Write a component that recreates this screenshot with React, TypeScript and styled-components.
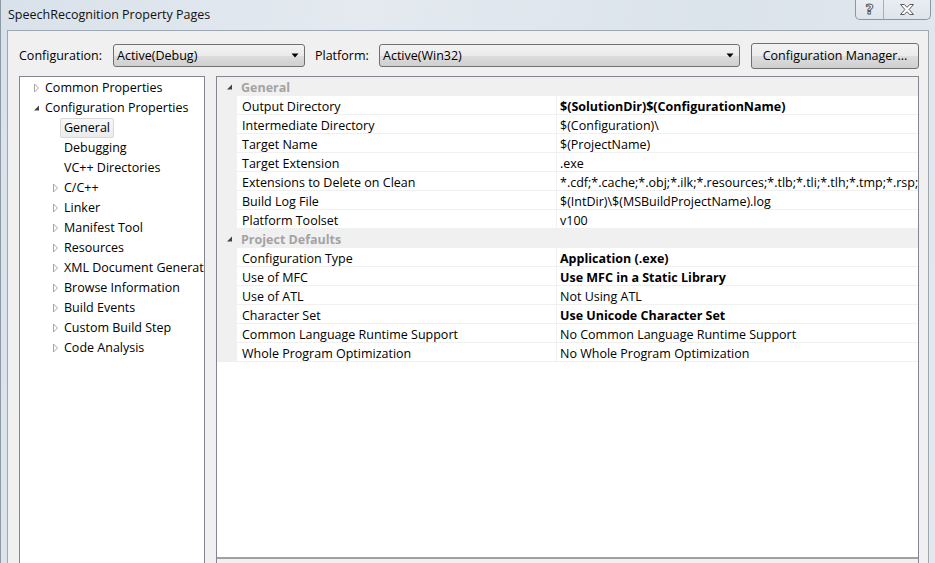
import React from 'react';
import styled, { createGlobalStyle } from 'styled-components';

const Global = createGlobalStyle`
  html, body { margin: 0; padding: 0; }
  body {
    width: 935px; height: 563px; overflow: hidden;
    font-family: "Open Sans", "Noto Sans", "DejaVu Sans", sans-serif;
    font-size: 12.5px; color: #000;
  }
`;

const Window = styled.div`
  width: 935px; height: 563px; overflow: hidden;
  box-sizing: border-box;
  border-left: 1px solid #8e99a6;
  background: linear-gradient(100deg, #d9e1ea 0%, #e4eaf0 35%, #dbe3eb 70%, #e2e8ee 100%);
  display: flex; flex-direction: column;
`;

const TitleBar = styled.div`
  height: 30px; flex: none;
  display: flex; align-items: flex-start; justify-content: space-between;
  padding: 0 4px 0 7px;
`;

const Title = styled.div`
  line-height: 30px; font-size: 12.5px; color: #111;
`;

const Caption = styled.div`
  display: flex; height: 19px;
  border: 1px solid #8b96a3; border-top: none;
  border-radius: 0 0 5px 5px;
  background: linear-gradient(#e9eef3, #dde4eb);
  overflow: hidden;
`;

const CapBtn = styled.div<{ $w: number; $sep?: boolean }>`
  width: ${p => p.$w}px; height: 19px;
  display: flex; align-items: center; justify-content: center;
  border-right: ${p => (p.$sep ? '1px solid #a6b0bb' : 'none')};
`;

const HelpGlyph = styled.span`
  font-family: "DejaVu Sans", sans-serif; font-weight: bold; font-size: 14px;
  color: #fff; -webkit-text-stroke: 1px #5a5a5a; line-height: 19px;
`;

const Client = styled.div`
  flex: 1; min-height: 0;
  margin-left: 6px; width: 922px; box-sizing: border-box;
  border: 1px solid #9ea8b3; border-bottom: none;
  background: #f0f0f0;
  padding: 12px 9px 0 11px;
  display: flex; flex-direction: column;
`;

const Toolbar = styled.div`
  height: 25px; flex: none;
  display: flex; align-items: center;
`;

const Label = styled.span<{ $w: number }>`
  width: ${p => p.$w}px; flex: none; white-space: nowrap;
`;

const Combo = styled.div<{ $w: number }>`
  width: ${p => p.$w}px; height: 23px; box-sizing: border-box; flex: none;
  border: 1px solid #707070; border-radius: 3px;
  background: linear-gradient(#f3f3f3 0%, #ebebeb 50%, #dddddd 51%, #cfcfcf 100%);
  display: flex; align-items: center; justify-content: space-between;
  padding: 0 5px 0 3px; margin-right: 10px;
`;

const Button = styled.div`
  width: 168px; height: 26px; box-sizing: border-box; flex: none;
  border: 1px solid #707070; border-radius: 3px;
  background: linear-gradient(#f3f3f3 0%, #ebebeb 50%, #dddddd 51%, #cfcfcf 100%);
  display: flex; align-items: center; justify-content: center;
  margin-left: 1px;
`;

const Main = styled.div`
  flex: 1; min-height: 0;
  margin-top: 8px;
  display: flex; gap: 11px;
`;

const Tree = styled.div`
  width: 186px; box-sizing: border-box; flex: none;
  border: 1px solid #828790; border-bottom: none;
  padding-top: 1px;
  background: #fff; overflow: hidden;
`;

const TreeRow = styled.div<{ $level: number }>`
  height: 20px; display: flex; align-items: center;
  padding-left: ${p => 13 + p.$level * 19}px;
  white-space: nowrap;
`;

const Arrow = styled.span`
  width: 8px; flex: none; display: flex; align-items: center;
`;

const TreeLabel = styled.span<{ $sel?: boolean }>`
  height: 20px; box-sizing: border-box; line-height: 18px;
  padding: 0 3px;
  border: 1px solid ${p => (p.$sel ? '#d9d9d9' : 'transparent')};
  border-radius: 2px;
  background: ${p => (p.$sel ? 'linear-gradient(#f7f7f7, #ebebeb)' : 'transparent')};
`;

const Right = styled.div`
  flex: 1; min-width: 0; box-sizing: border-box;
  border: 1px solid #828790; border-bottom: none;
  display: flex; flex-direction: column;
  background: #f0f0f0;
`;

const Grid = styled.div`
  height: 480px; flex: none;
  background: #fff; overflow: hidden;
  border-bottom: 2px solid #a0a0a0;
`;

const CatRow = styled.div`
  height: 19px; display: flex; align-items: center;
  background: #f0f0f0;
`;

const CatGlyph = styled.span`
  width: 15px; padding-left: 9px; flex: none; display: flex; align-items: center;
`;

const CatText = styled.span`
  font-weight: bold; color: #a3a3a3; line-height: 19px; padding-top: 1px;
`;

const PropRow = styled.div`
  height: 19px; display: flex;
  background: #f0f0f0;
  padding-left: 20px;
  overflow: hidden;
`;

const Cell = styled.div<{ $w?: number; $bold?: boolean }>`
  ${p => (p.$w ? `width: ${p.$w}px; flex: none;` : 'flex: 1; min-width: 0;')}
  box-sizing: border-box; height: 19px;
  background: #fff;
  border-bottom: 1px solid #f0f0f0;
  border-right: ${p => (p.$w ? '1px solid #f0f0f0' : 'none')};
  padding: 1px 0 0 ${p => (p.$w ? 5 : 3)}px;
  line-height: 19px; white-space: nowrap;
  font-weight: ${p => (p.$bold ? 'bold' : 'normal')};
`;

const Collapsed = () => (
  <svg width="8" height="10" viewBox="0 0 8 10">
    <path d="M1.5 1 L5.5 5 L1.5 9 Z" fill="#fff" stroke="#a6a6a6" strokeWidth="1" />
  </svg>
);

const Expanded = () => (
  <svg width="8" height="10" viewBox="0 0 8 10">
    <path d="M6 2.5 L6 7.5 L1 7.5 Z" fill="#444" />
  </svg>
);

const DropArrow = () => (
  <svg width="8" height="5" viewBox="0 0 8 5">
    <path d="M0.5 0.5 L7.5 0.5 L4 4.5 Z" fill="#000" />
  </svg>
);

const CloseGlyph = () => (
  <svg width="14" height="11" viewBox="0 0 14 11">
    <path d="M0.5 0.5 H4.3 L7 3.3 L9.7 0.5 H13.5 L9.1 5.5 L13.5 10.5 H9.7 L7 7.7 L4.3 10.5 H0.5 L4.9 5.5 Z"
      fill="#fff" stroke="#5a5a5a" strokeWidth="1" strokeLinejoin="round" />
  </svg>
);

type TreeItem = { label: string; level: number; state: 'c' | 'e' | 'n'; sel?: boolean };
const treeItems: TreeItem[] = [
  { label: 'Common Properties', level: 0, state: 'c' },
  { label: 'Configuration Properties', level: 0, state: 'e' },
  { label: 'General', level: 1, state: 'n', sel: true },
  { label: 'Debugging', level: 1, state: 'n' },
  { label: 'VC++ Directories', level: 1, state: 'n' },
  { label: 'C/C++', level: 1, state: 'c' },
  { label: 'Linker', level: 1, state: 'c' },
  { label: 'Manifest Tool', level: 1, state: 'c' },
  { label: 'Resources', level: 1, state: 'c' },
  { label: 'XML Document Generator', level: 1, state: 'c' },
  { label: 'Browse Information', level: 1, state: 'c' },
  { label: 'Build Events', level: 1, state: 'c' },
  { label: 'Custom Build Step', level: 1, state: 'c' },
  { label: 'Code Analysis', level: 1, state: 'c' },
];

type Prop = { name: string; value: string; bold?: boolean };
const sections: { title: string; props: Prop[] }[] = [
  {
    title: 'General',
    props: [
      { name: 'Output Directory', value: '$(SolutionDir)$(ConfigurationName)', bold: true },
      { name: 'Intermediate Directory', value: '$(Configuration)\\' },
      { name: 'Target Name', value: '$(ProjectName)' },
      { name: 'Target Extension', value: '.exe' },
      { name: 'Extensions to Delete on Clean', value: '*.cdf;*.cache;*.obj;*.ilk;*.resources;*.tlb;*.tli;*.tlh;*.tmp;*.rsp;*.pgc;*.pgd;*.meta;$(TargetPath)' },
      { name: 'Build Log File', value: '$(IntDir)\\$(MSBuildProjectName).log' },
      { name: 'Platform Toolset', value: 'v100' },
    ],
  },
  {
    title: 'Project Defaults',
    props: [
      { name: 'Configuration Type', value: 'Application (.exe)', bold: true },
      { name: 'Use of MFC', value: 'Use MFC in a Static Library', bold: true },
      { name: 'Use of ATL', value: 'Not Using ATL' },
      { name: 'Character Set', value: 'Use Unicode Character Set', bold: true },
      { name: 'Common Language Runtime Support', value: 'No Common Language Runtime Support' },
      { name: 'Whole Program Optimization', value: 'No Whole Program Optimization' },
    ],
  },
];

export default function App() {
  return (
    <>
      <Global />
      <Window>
        <TitleBar>
          <Title>SpeechRecognition Property Pages</Title>
          <Caption>
            <CapBtn $w={27} $sep><HelpGlyph>?</HelpGlyph></CapBtn>
            <CapBtn $w={46}><CloseGlyph /></CapBtn>
          </Caption>
        </TitleBar>
        <Client>
          <Toolbar>
            <Label $w={94}>Configuration:</Label>
            <Combo $w={192}><span>Active(Debug)</span><DropArrow /></Combo>
            <Label $w={64}>Platform:</Label>
            <Combo $w={361}><span>Active(Win32)</span><DropArrow /></Combo>
            <Button>Configuration Manager...</Button>
          </Toolbar>
          <Main>
            <Tree>
              {treeItems.map(it => (
                <TreeRow key={it.label} $level={it.level}>
                  <Arrow>{it.state === 'c' ? <Collapsed /> : it.state === 'e' ? <Expanded /> : null}</Arrow>
                  <TreeLabel $sel={it.sel}>{it.label}</TreeLabel>
                </TreeRow>
              ))}
            </Tree>
            <Right>
              <Grid>
                {sections.map(sec => (
                  <React.Fragment key={sec.title}>
                    <CatRow>
                      <CatGlyph><Expanded /></CatGlyph>
                      <CatText>{sec.title}</CatText>
                    </CatRow>
                    {sec.props.map(p => (
                      <PropRow key={p.name}>
                        <Cell $w={320}>{p.name}</Cell>
                        <Cell $bold={p.bold}>{p.value}</Cell>
                      </PropRow>
                    ))}
                  </React.Fragment>
                ))}
              </Grid>
            </Right>
          </Main>
        </Client>
      </Window>
    </>
  );
}
